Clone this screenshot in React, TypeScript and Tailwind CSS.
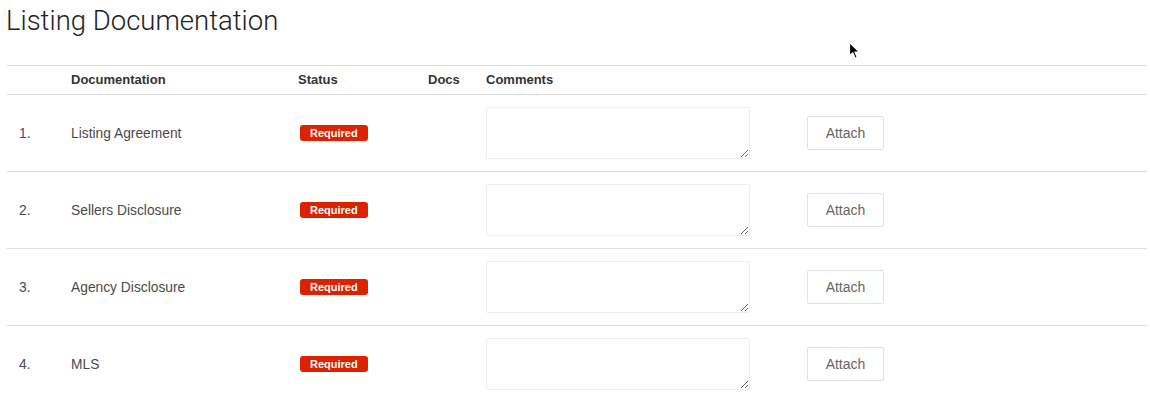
import React from 'react';

const rows = ['Listing Agreement', 'Sellers Disclosure', 'Agency Disclosure', 'MLS'];

function Cursor() {
  return (
    <svg className="absolute left-[848px] top-[41px]" width="14" height="20" viewBox="0 0 14 20">
      <path d="M1.5 1.5 L1.5 15 L4.8 11.8 L7.2 17.2 L9.2 16.3 L6.9 11 L11.4 11 Z" fill="#000" stroke="#fff" strokeWidth="1.2" strokeLinejoin="round" />
    </svg>
  );
}

export default function App() {
  return (
    <div className="relative h-[400px] w-[1150px] overflow-hidden bg-white font-['Liberation_Sans',Arial,sans-serif] text-[13px] text-[#333]">
      <h1 className="ml-[6px] mt-[4px] font-['Roboto',sans-serif] text-[27.5px] font-light leading-[34px] text-[#222]">Listing Documentation</h1>
      <table className="ml-[7px] mt-[27px] w-[1140px] table-fixed border-collapse">
        <colgroup>
          <col className="w-[56px]" />
          <col className="w-[227px]" />
          <col className="w-[130px]" />
          <col className="w-[58px]" />
          <col className="w-[321px]" />
          <col />
        </colgroup>
        <thead>
          <tr className="h-[29px] border-y border-[#ddd] text-left font-bold text-[#333]">
            <th className="px-2"></th>
            <th className="px-2">Documentation</th>
            <th className="px-2">Status</th>
            <th className="px-2">Docs</th>
            <th className="px-2">Comments</th>
            <th className="px-2"></th>
          </tr>
        </thead>
        <tbody>
          {rows.map((name, i) => (
            <tr key={name} className="h-[77px] border-b border-[#ddd] text-[13.8px] text-[#4a4a4a]">
              <td className="pl-3 pt-[3px]">{i + 1}.</td>
              <td className="px-2 pt-[3px]">{name}</td>
              <td className="px-2">
                <span className="ml-[2px] inline-block rounded-[3px] bg-[#dd2200] px-[10px] text-[11px] font-bold leading-[16px] text-white">Required</span>
              </td>
              <td className="px-2"></td>
              <td className="px-2">
                <textarea className="block h-[52px] w-[264px] rounded-[2px] border border-[#eee] bg-white outline-none" />
              </td>
              <td className="px-2">
                <button className="h-[34px] w-[77px] rounded-[2px] border border-[#e2e2e2] bg-white text-[14px] text-[#666]">Attach</button>
              </td>
            </tr>
          ))}
        </tbody>
      </table>
      <Cursor />
    </div>
  );
}
